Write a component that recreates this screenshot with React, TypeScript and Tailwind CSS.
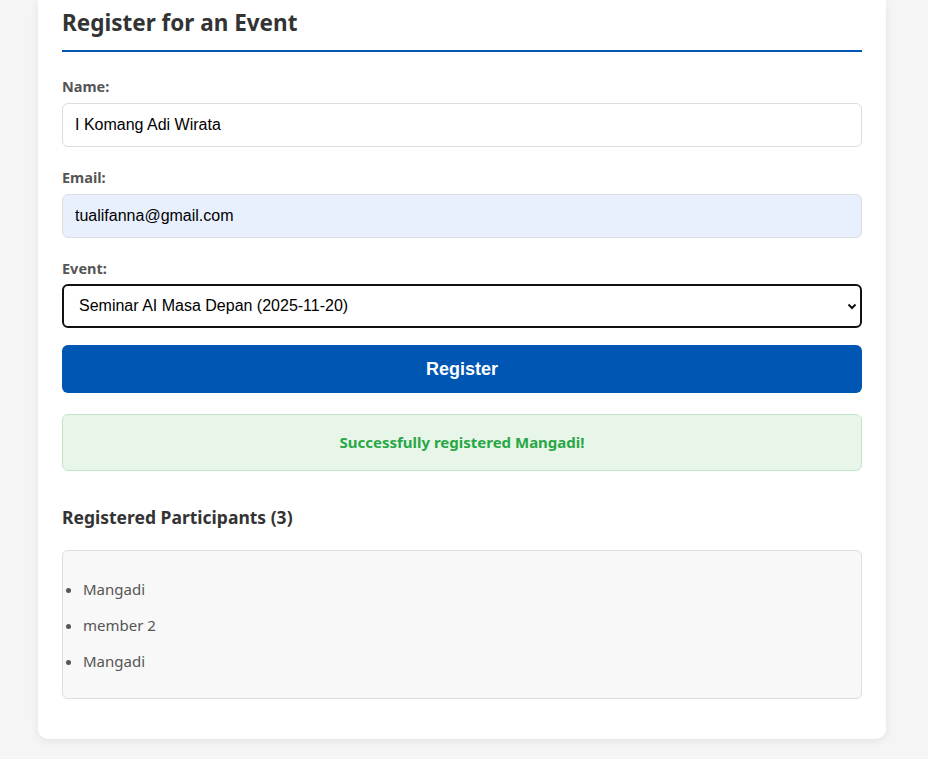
import { useState } from 'react';

const participants = ['Mangadi', 'member 2', 'Mangadi'];

export default function App() {
  const [name, setName] = useState('I Komang Adi Wirata');
  const [email, setEmail] = useState('tualifanna@gmail.com');
  const [event, setEvent] = useState('seminar-ai');

  return (
    <div className="min-h-[759px] bg-[#f4f5f4] font-['Noto_Sans',sans-serif] text-[#333]">
      <div className="ml-[38px] w-[848px] bg-white rounded-b-[10px] shadow-[0_2px_10px_rgba(0,0,0,0.08)] px-6 pt-[6px] pb-10">
        <h2 className="text-[22.5px] font-bold leading-[34px] text-[#333] pb-[10px] border-b-2 border-[#0056b3] mb-[24px]">
          Register for an Event
        </h2>

        <form onSubmit={(e) => e.preventDefault()}>
          <label className="block text-[14.5px] font-bold text-[#555] leading-[20px] mb-[7px]">Name:</label>
          <input
            value={name}
            onChange={(e) => setName(e.target.value)}
            className="w-full h-[44px] px-3 border border-[#ddd] rounded-[6px] text-[16px] font-['Liberation_Sans',Arial,sans-serif] text-black mb-[20px] outline-none"
          />

          <label className="block text-[14.5px] font-bold text-[#555] leading-[20px] mb-[7px]">Email:</label>
          <input
            value={email}
            onChange={(e) => setEmail(e.target.value)}
            className="w-full h-[44px] px-3 border border-[#ddd] rounded-[6px] bg-[#e8f0fe] text-[16px] font-['Liberation_Sans',Arial,sans-serif] text-black mb-[20px] outline-none"
          />

          <label className="block text-[14.5px] font-bold text-[#555] leading-[20px] mb-[6px]">Event:</label>
          <div className="relative mb-[17px]">
            <select
              value={event}
              onChange={(e) => setEvent(e.target.value)}
              className="appearance-none w-full h-[44px] pl-[15px] pr-8 border-2 border-[#111] rounded-[6px] bg-white text-[16px] font-['Liberation_Sans',Arial,sans-serif] text-black outline-none"
            >
              <option value="seminar-ai">Seminar AI Masa Depan (2025-11-20)</option>
            </select>
            <svg
              className="absolute right-[4px] top-1/2 -translate-y-1/2 pointer-events-none"
              width="12"
              height="12"
              viewBox="0 0 12 12"
            >
              <path d="M2.5 4.5 L6 8 L9.5 4.5" fill="none" stroke="#111" strokeWidth="2" />
            </svg>
          </div>

          <button
            type="submit"
            className="w-full h-[48px] bg-[#0056b3] text-white rounded-[6px] text-[18px] font-bold font-['Liberation_Sans',Arial,sans-serif]"
          >
            Register
          </button>
        </form>

        <div className="mt-[21px] h-[57px] flex items-center justify-center bg-[#e8f5e9] border border-[#c3e6cb] rounded-[6px] text-[#28a745] text-[15px] font-bold">
          Successfully registered Mangadi!
        </div>

        <h3 className="mt-[34px] text-[17.5px] font-bold leading-[24px] text-[#333]">
          Registered Participants (3)
        </h3>

        <ul className="mt-[21px] bg-[#f8f8f8] border border-[#ddd] rounded-[6px] pl-[20px] pt-[27px] pb-[26px] list-disc">
          {participants.map((p, i) => (
            <li key={i} className="text-[15px] leading-[22px] text-[#555] mb-[14px] last:mb-0 marker:text-[#555]">
              {p}
            </li>
          ))}
        </ul>
      </div>
    </div>
  );
}
